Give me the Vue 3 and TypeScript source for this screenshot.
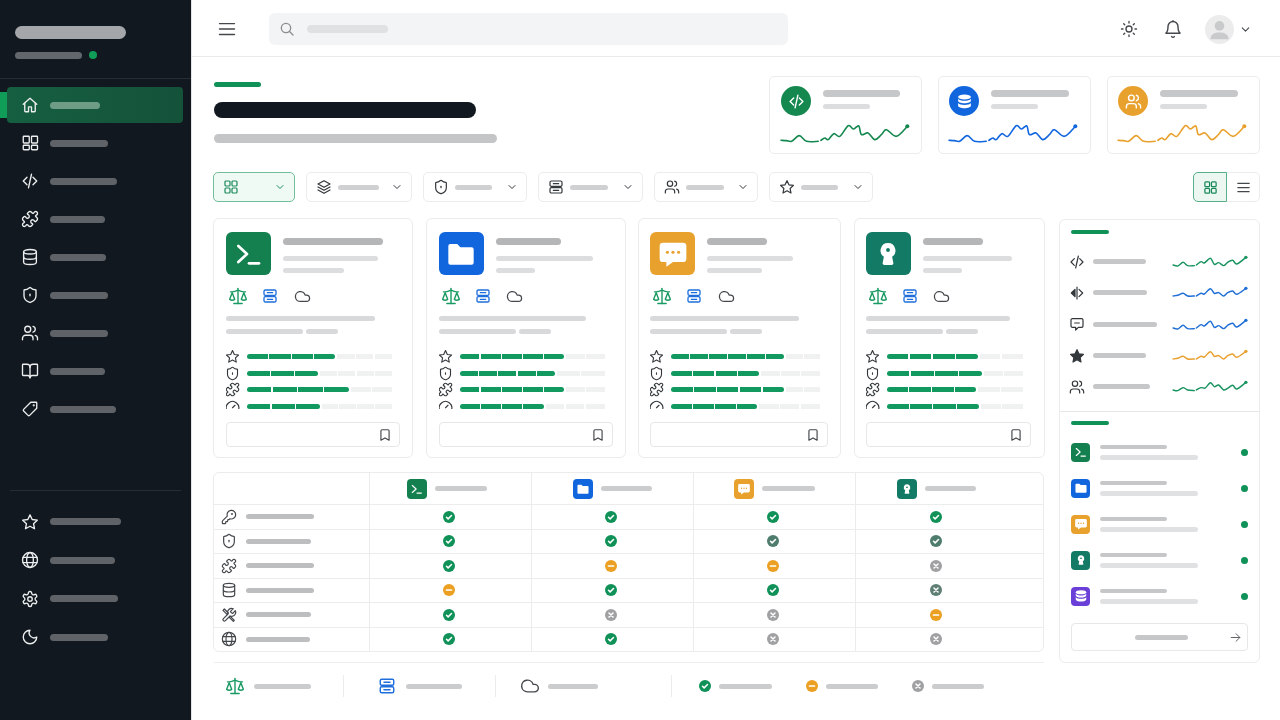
<script setup lang="ts">
const icons: Record<string, string> = {
  home: '<path d="M3 11 12 3l9 8"/><path d="M5 9.5V20a1 1 0 0 0 1 1h4v-6.5h4V21h4a1 1 0 0 0 1-1V9.5"/>',
  dash: '<rect x="3" y="3" width="8" height="9" rx="1"/><rect x="14" y="3" width="8" height="9" rx="1"/><rect x="3" y="15" width="8" height="6" rx="1"/><rect x="14" y="15" width="8" height="6" rx="1"/>',
  code: '<path d="m8 7-5 5 5 5"/><path d="m16 7 5 5-5 5"/><path d="m14 3-4 18"/>',
  puzzle: '<path d="M19.439 7.85c-.049.322.059.648.289.878l1.568 1.568c.47.47.706 1.087.706 1.704s-.235 1.233-.706 1.704l-1.611 1.611a.98.98 0 0 1-.837.276c-.47-.07-.802-.48-.968-.925a2.501 2.501 0 1 0-3.214 3.214c.446.166.855.497.925.968a.979.979 0 0 1-.276.837l-1.61 1.61a2.404 2.404 0 0 1-1.705.707 2.402 2.402 0 0 1-1.704-.706l-1.568-1.568a1.026 1.026 0 0 0-.877-.29c-.493.074-.84.504-1.02.968a2.5 2.5 0 1 1-3.237-3.237c.464-.18.894-.527.967-1.02a1.026 1.026 0 0 0-.289-.877l-1.568-1.568A2.402 2.402 0 0 1 1.998 12c0-.617.236-1.234.706-1.704L4.23 8.77c.24-.24.581-.353.917-.303.515.077.877.528 1.073 1.01a2.5 2.5 0 1 0 3.259-3.259c-.482-.196-.933-.558-1.01-1.073-.05-.336.062-.676.303-.917l1.525-1.525A2.402 2.402 0 0 1 12 1.998c.617 0 1.234.236 1.704.706l1.568 1.568c.23.23.556.338.877.29.493-.074.84-.504 1.02-.968a2.5 2.5 0 1 1 3.237 3.237c-.464.18-.894.527-.967 1.02Z"/>',
  db: '<ellipse cx="12" cy="5" rx="8.5" ry="3"/><path d="M3.5 5v14a8.5 3 0 0 0 17 0V5"/><path d="M3.5 12a8.5 3 0 0 0 17 0"/>',
  shield: '<path d="M20 13c0 5-3.5 7.5-7.66 8.95a1 1 0 0 1-.67-.01C7.5 20.5 4 18 4 13V6a1 1 0 0 1 1-1c2 0 4.5-1.2 6.24-2.72a1.17 1.17 0 0 1 1.52 0C14.51 3.81 17 5 19 5a1 1 0 0 1 1 1z"/><path d="M12 11v2"/>',
  users: '<path d="M16 21v-2a4 4 0 0 0-4-4H6a4 4 0 0 0-4 4v2"/><circle cx="9" cy="7" r="4"/><path d="M22 21v-2a4 4 0 0 0-3-3.87"/><path d="M16 3.13a4 4 0 0 1 0 7.75"/>',
  book: '<path d="M12 7v14"/><path d="M3 18a1 1 0 0 1-1-1V4a1 1 0 0 1 1-1h5a4 4 0 0 1 4 4 4 4 0 0 1 4-4h5a1 1 0 0 1 1 1v13a1 1 0 0 1-1 1h-6a3 3 0 0 0-3 3 3 3 0 0 0-3-3z"/>',
  tag: '<path d="M13 3h7a1 1 0 0 1 1 1v7l-9.5 9.5a1.5 1.5 0 0 1-2.1 0l-5.9-5.9a1.5 1.5 0 0 1 0-2.1z"/><circle cx="17" cy="7" r=".6"/>',
  star: '<path d="m12 2.5 2.9 6.2 6.8.9-5 4.7 1.3 6.7-6-3.3-6 3.3 1.3-6.7-5-4.7 6.8-.9z"/>',
  starFill: '<path fill="currentColor" d="m12 2.5 2.9 6.2 6.8.9-5 4.7 1.3 6.7-6-3.3-6 3.3 1.3-6.7-5-4.7 6.8-.9z"/>',
  globe: '<circle cx="12" cy="12" r="10"/><ellipse cx="12" cy="12" rx="4.5" ry="10"/><path d="M2.8 8.5h18.4M2.8 15.5h18.4"/>',
  gear: '<path d="M12.22 2h-.44a2 2 0 0 0-2 2v.18a2 2 0 0 1-1 1.73l-.43.25a2 2 0 0 1-2 0l-.15-.08a2 2 0 0 0-2.73.73l-.22.38a2 2 0 0 0 .73 2.73l.15.1a2 2 0 0 1 1 1.72v.51a2 2 0 0 1-1 1.74l-.15.09a2 2 0 0 0-.73 2.73l.22.38a2 2 0 0 0 2.73.73l.15-.08a2 2 0 0 1 2 0l.43.25a2 2 0 0 1 1 1.73V20a2 2 0 0 0 2 2h.44a2 2 0 0 0 2-2v-.18a2 2 0 0 1 1-1.73l.43-.25a2 2 0 0 1 2 0l.15.08a2 2 0 0 0 2.73-.73l.22-.39a2 2 0 0 0-.73-2.73l-.15-.08a2 2 0 0 1-1-1.74v-.5a2 2 0 0 1 1-1.74l.15-.09a2 2 0 0 0 .73-2.73l-.22-.38a2 2 0 0 0-2.73-.73l-.15.08a2 2 0 0 1-2 0l-.43-.25a2 2 0 0 1-1-1.73V4a2 2 0 0 0-2-2z"/><circle cx="12" cy="12" r="3"/>',
  moon: '<path d="M12 3a6.5 6.5 0 0 0 9 9 9 9 0 1 1-9-9Z"/>',
  menu: '<path d="M3 5.5h18M3 12h18M3 18.5h18"/>',
  search: '<circle cx="10.5" cy="10.5" r="7"/><path d="m21 21-5.5-5.5"/>',
  sun: '<circle cx="12" cy="12" r="4"/><path d="M12 2v2M12 20v2M4.9 4.9l1.4 1.4M17.7 17.7l1.4 1.4M2 12h2M20 12h2M4.9 19.1l1.4-1.4M17.7 6.3l1.4-1.4"/>',
  bell: '<path d="M6 9a6 6 0 0 1 12 0c0 6 2.5 8 2.5 8h-17S6 15 6 9"/><path d="M12 3V2M10.3 21a1.94 1.94 0 0 0 3.4 0"/>',
  chevron: '<path d="m6 9 6 6 6-6"/>',
  layers: '<path d="M12 2.5 3 7.5l9 5 9-5z"/><path d="m3 12 9 5 9-5"/><path d="m3 16.5 9 5 9-5"/>',
  server: '<rect x="3" y="3" width="18" height="8" rx="2"/><rect x="3" y="13" width="18" height="8" rx="2"/><path d="M8 7h8M8 17h8"/>',
  scale: '<path d="m16 16 3-8 3 8c-.87.65-1.92 1-3 1s-2.13-.35-3-1Z"/><path d="m2 16 3-8 3 8c-.87.65-1.92 1-3 1s-2.13-.35-3-1Z"/><path d="M7 21h10"/><path d="M12 3v18"/><path d="M3 7h2c2 0 5-1 7-2 2 1 5 2 7 2h2"/>',
  cloud: '<path d="M17.5 19H9a7 7 0 1 1 6.71-9h1.79a4.5 4.5 0 1 1 0 9Z"/>',
  gauge: '<path d="m12 14 4-4"/><path d="M3.34 19a10 10 0 1 1 17.32 0"/>',
  bookmark: '<path d="m19 21-7-4-7 4V5a2 2 0 0 1 2-2h10a2 2 0 0 1 2 2z"/>',
  grid: '<rect x="3" y="3" width="7.5" height="7.5" rx="1.5"/><rect x="13.5" y="3" width="7.5" height="7.5" rx="1.5"/><rect x="3" y="13.5" width="7.5" height="7.5" rx="1.5"/><rect x="13.5" y="13.5" width="7.5" height="7.5" rx="1.5"/>',
  key: '<path d="M2.586 17.414A2 2 0 0 0 2 18.828V21a1 1 0 0 0 1 1h3a1 1 0 0 0 1-1v-1a1 1 0 0 1 1-1h1a1 1 0 0 0 1-1v-1a1 1 0 0 1 1-1h.172a2 2 0 0 0 1.414-.586l.814-.814a6.5 6.5 0 1 0-4-4z"/><circle cx="16.5" cy="7.5" r=".6"/>',
  tools: '<path d="M14.7 6.3a1 1 0 0 0 0 1.4l1.6 1.6a1 1 0 0 0 1.4 0l3.77-3.77a6 6 0 0 1-7.94 7.94l-6.91 6.91a2.12 2.12 0 0 1-3-3l6.91-6.91a6 6 0 0 1 7.94-7.94z"/><path d="M3 5l2-2 6 6-2 2zM14 14l6 6-1.5 1.5-6-6"/>',
  arrow: '<path d="M4 12h16"/><path d="m13 5 7 7-7 7"/>',
  diamond: '<path d="M12 3v18"/><path fill="currentColor" d="M9 6.5 3.5 12 9 17.5z"/><path d="m15 6.5 5.5 5.5-5.5 5.5"/>',
  chat: '<path d="M5 4h14a2 2 0 0 1 2 2v9a2 2 0 0 1-2 2h-5l-4 4v-4H5a2 2 0 0 1-2-2V6a2 2 0 0 1 2-2z"/><path d="M8.5 10.5h7"/>',
  terminal: '<path d="m4 6 6.5 6L4 18"/><path d="M12 19h7.500"/>',
  folder: '<path fill="#fff" stroke="none" d="M4 4.5h5.2L11.5 7H20a1.5 1.5 0 0 1 1.5 1.5v10A1.5 1.5 0 0 1 20 20H4a1.5 1.5 0 0 1-1.5-1.5V6A1.5 1.5 0 0 1 4 4.5z"/>',
  bubble: '<path fill="#fff" stroke="none" d="M4.5 3.5h15A2.5 2.5 0 0 1 22 6v9.5a2.5 2.5 0 0 1-2.5 2.5H12l-5 3.5V18H4.5A2.5 2.5 0 0 1 2 15.5V6a2.5 2.5 0 0 1 2.5-2.5z"/><circle cx="7.8" cy="10.7" r="1.2" fill="#e9a12e" stroke="none"/><circle cx="12" cy="10.7" r="1.2" fill="#e9a12e" stroke="none"/><circle cx="16.2" cy="10.7" r="1.2" fill="#e9a12e" stroke="none"/>',
  keyhole: '<g transform="translate(12 12) scale(.86) translate(-12 -12)"><path fill="#fff" stroke="none" d="M12 2.5a6.5 6.5 0 0 1 3.6 11.9l1 5.1a1.5 1.5 0 0 1-1.5 2H8.9a1.5 1.5 0 0 1-1.5-2l1-5.1A6.5 6.5 0 0 1 12 2.5z"/><circle cx="12" cy="8.5" r="1.7" fill="#137a66" stroke="none"/></g>',
  dbFill: '<ellipse cx="12" cy="5.5" rx="9" ry="3.5" fill="#fff" stroke="none"/><path fill="#fff" stroke="none" d="M3 8v3c0 1.9 4 3.5 9 3.5s9-1.6 9-3.5V8c-1.5 1.9-5 3-9 3s-7.5-1.1-9-3z"/><path fill="#fff" stroke="none" d="M3 14v4c0 1.9 4 3.5 9 3.5s9-1.6 9-3.5v-4c-1.5 1.9-5 2.8-9 2.8S4.5 15.9 3 14z"/>',
}

const statusColors: Record<string, string> = { c: '#0f9158', d: '#4f7d6d', m: '#eba023', x: '#a0a1a3', y: '#5f7f74' }
const statusSvg = (s: string) => {
  const mark = s === 'c' || s === 'd'
    ? '<path d="m7 12.5 3.3 3.3L17 9" fill="none" stroke="#fff" stroke-width="3" stroke-linecap="round" stroke-linejoin="round"/>'
    : s === 'm'
      ? '<path d="M7 12h10" stroke="#fff" stroke-width="3.4" stroke-linecap="round"/>'
      : '<path d="m8 8 8 8M16 8l-8 8" stroke="#fff" stroke-width="3" stroke-linecap="round"/>'
  return `<circle cx="12" cy="12" r="12" fill="${statusColors[s]}"/>${mark}`
}

// turns the M..L.. point lists into a smooth curve (catmull-rom)
const smooth = (d: string) =>
  d.split('M').filter(Boolean).map((seg) => {
    const p = seg.split('L').map((s) => s.trim().split(' ').map(Number))
    let out = `M${p[0][0]} ${p[0][1]}`
    for (let i = 0; i < p.length - 1; i++) {
      const a = p[i - 1] ?? p[i]
      const b = p[i]
      const c = p[i + 1]
      const e = p[i + 2] ?? c
      out += `C${b[0] + (c[0] - a[0]) / 6} ${b[1] + (c[1] - a[1]) / 6} ${c[0] - (e[0] - b[0]) / 6} ${c[1] - (e[1] - b[1]) / 6} ${c[0]} ${c[1]}`
    }
    return out
  }).join('')

const navTop = [
  { icon: 'home', w: 50, active: true },
  { icon: 'dash', w: 58 },
  { icon: 'code', w: 67 },
  { icon: 'puzzle', w: 55 },
  { icon: 'db', w: 56 },
  { icon: 'shield', w: 58 },
  { icon: 'users', w: 58 },
  { icon: 'book', w: 55 },
  { icon: 'tag', w: 66 },
]
const navBottom = [
  { icon: 'star', w: 71 },
  { icon: 'globe', w: 65 },
  { icon: 'gear', w: 68 },
  { icon: 'moon', w: 58 },
]

const sparkA = smooth('M63 422L80 423L95 425L118 408L140 425L175 425M183 422L195 415L205 420L222 402L240 410L265 378L280 388L290 382L298 380L305 405L325 400L345 420L365 405L380 390L410 410L443 380')
const stats = [
  { color: '#14884f', icon: 'code', w: 77 },
  { color: '#1166de', icon: 'dbFill', w: 78 },
  { color: '#e9a12e', icon: 'users', w: 78 },
]

const filters = [
  { icon: 'layers', w: 41, width: 106 },
  { icon: 'shield', w: 37, width: 104 },
  { icon: 'server', w: 38, width: 105 },
  { icon: 'users', w: 38, width: 104 },
  { icon: 'star', w: 37, width: 104 },
]

const apps: Record<string, { bg: string; icon: string }> = {
  term: { bg: '#14804f', icon: 'terminal' },
  folder: { bg: '#1166de', icon: 'folder' },
  chat: { bg: '#e9a12e', icon: 'bubble' },
  lock: { bg: '#137a66', icon: 'keyhole' },
  data: { bg: '#6a3fd8', icon: 'dbFill' },
}

const metricIcons = ['star', 'shield', 'puzzle', 'gauge']
const cards = [
  { app: 'term', width: 200, title: 100, sub: [95, 61], desc: 149, fill: [[61, 4, 3], [49, 3, 4], [70, 4, 2], [50, 3, 4]] },
  { app: 'folder', width: 200, title: 65, sub: [97, 39], desc: 147, fill: [[72, 5, 2], [66, 5, 2], [72, 5, 2], [58, 4, 3]] },
  { app: 'chat', width: 203, title: 60, sub: [86, 55], desc: 149, fill: [[76, 6, 2], [59, 4, 3], [76, 5, 2], [58, 4, 3]] },
  { app: 'lock', width: 191, title: 60, sub: [89, 39], desc: 144, fill: [[67, 4, 2], [70, 4, 2], [66, 4, 2], [68, 4, 2]] },
]
const gridCols = cards.map((c) => c.width + 'px').join(' ')

const cols = [
  { app: 'term', w: 52 },
  { app: 'folder', w: 51 },
  { app: 'chat', w: 53 },
  { app: 'lock', w: 51 },
]
const rows = [
  { icon: 'key', w: 68, s: ['c', 'c', 'c', 'c'] },
  { icon: 'shield', w: 65, s: ['c', 'c', 'd', 'd'] },
  { icon: 'puzzle', w: 68, s: ['c', 'm', 'm', 'x'] },
  { icon: 'db', w: 68, s: ['m', 'c', 'c', 'y'] },
  { icon: 'tools', w: 65, s: ['c', 'x', 'x', 'm'] },
  { icon: 'globe', w: 64, s: ['c', 'c', 'x', 'x'] },
]

const sparkB = smooth('M368 150L382 153L398 142L412 152L432 152M438 150L452 140L462 144L480 130L492 148L505 143L520 152L532 142L547 136L560 147L587 127')
const sparkC = smooth('M368 150L382 148L398 142L412 150L432 150M438 150L452 142L462 144L480 128L492 142L505 140L520 150L532 140L547 135L560 145L587 127')
const sparkD = smooth('M368 150L382 152L398 143L412 150L432 152M438 150L452 143L465 144L480 128L492 140L505 135L520 150L532 145L547 136L560 147L587 127')
const activity = [
  { icon: 'code', w: 53, color: '#1a9460', path: sparkB },
  { icon: 'diamond', w: 54, color: '#1f6fd6', path: sparkC },
  { icon: 'chat', w: 64, color: '#1f6fd6', path: sparkB },
  { icon: 'starFill', w: 53, color: '#e9a02f', path: sparkC },
  { icon: 'users', w: 57, color: '#1a9460', path: sparkD },
]
const services = ['term', 'folder', 'chat', 'lock', 'data']
</script>

<template>
  <div class="page">
    <aside class="side">
      <div class="brand">
        <div class="brand-name"></div>
        <div class="brand-sub"><span class="brand-line"></span><span class="brand-dot"></span></div>
      </div>
      <nav class="nav">
        <a v-for="item in navTop" :key="item.icon" class="nav-item" :class="{ active: item.active }">
          <svg class="ic nav-ic" viewBox="0 0 24 24" v-html="icons[item.icon]"></svg>
          <span class="nav-label" :style="{ width: item.w + 'px' }"></span>
        </a>
      </nav>
      <nav class="nav nav-bottom">
        <a v-for="item in navBottom" :key="item.icon" class="nav-item">
          <svg class="ic nav-ic" viewBox="0 0 24 24" v-html="icons[item.icon]"></svg>
          <span class="nav-label" :style="{ width: item.w + 'px' }"></span>
        </a>
      </nav>
    </aside>

    <div class="main">
      <header class="top">
        <svg class="ic top-ic" viewBox="0 0 24 24" v-html="icons.menu"></svg>
        <div class="search">
          <svg class="ic search-ic" viewBox="0 0 24 24" v-html="icons.search"></svg>
          <span class="search-text"></span>
        </div>
        <div class="top-right">
          <svg class="ic sun" viewBox="0 0 24 24" v-html="icons.sun"></svg>
          <svg class="ic top-ic bell" viewBox="0 0 24 24" v-html="icons.bell"></svg>
          <div class="avatar">
            <svg viewBox="0 0 24 24"><circle cx="12" cy="9" r="4" fill="#c9cacb" /><path d="M4.5 20c0-4 3.5-5.5 7.5-5.5s7.5 1.5 7.5 5.5z" fill="#c9cacb" /></svg>
          </div>
          <svg class="ic chev" viewBox="0 0 24 24" v-html="icons.chevron"></svg>
        </div>
      </header>

      <div class="content">
        <section class="hero">
          <div class="heading">
            <div class="accent"></div>
            <div class="title"></div>
            <div class="subtitle"></div>
          </div>
          <div class="stats">
            <div v-for="s in stats" :key="s.color" class="stat" :style="{ color: s.color }">
              <div class="stat-head">
                <div class="stat-ic" :style="{ background: s.color }">
                  <svg class="ic" viewBox="0 0 24 24" v-html="icons[s.icon]"></svg>
                </div>
                <div class="stat-text">
                  <div class="stat-line" :style="{ width: s.w + 'px' }"></div>
                  <div class="stat-sub"></div>
                </div>
              </div>
              <svg class="stat-spark" viewBox="63 370 385 60">
                <path :d="sparkA" fill="none" stroke="currentColor" stroke-width="4.8" stroke-linejoin="round" stroke-linecap="round" />
                <circle cx="443" cy="380" r="6" fill="currentColor" />
              </svg>
            </div>
          </div>
        </section>

        <section class="filters">
          <button class="filter filter-on">
            <svg class="ic filter-ic" viewBox="0 0 24 24" v-html="icons.grid"></svg>
            <svg class="ic filter-chev" viewBox="0 0 24 24" v-html="icons.chevron"></svg>
          </button>
          <button v-for="f in filters" :key="f.icon" class="filter" :style="{ width: f.width + 'px' }">
            <svg class="ic filter-ic" viewBox="0 0 24 24" v-html="icons[f.icon]"></svg>
            <span class="filter-label" :style="{ width: f.w + 'px' }"></span>
            <svg class="ic filter-chev" viewBox="0 0 24 24" v-html="icons.chevron"></svg>
          </button>
          <div class="toggle">
            <button class="toggle-btn on"><svg class="ic" viewBox="0 0 24 24" v-html="icons.grid"></svg></button>
            <button class="toggle-btn"><svg class="ic" viewBox="0 0 24 24" v-html="icons.menu"></svg></button>
          </div>
        </section>

        <section class="body">
          <div class="left">
            <div class="cards" :style="{ gridTemplateColumns: gridCols }">
              <article v-for="c in cards" :key="c.app" class="card">
                <div class="card-head">
                  <div class="card-ic" :style="{ background: apps[c.app].bg }">
                    <svg class="ic" viewBox="0 0 24 24" v-html="icons[apps[c.app].icon]"></svg>
                  </div>
                  <div class="card-text">
                    <div class="card-title" :style="{ width: c.title + 'px' }"></div>
                    <div class="card-sub" :style="{ width: c.sub[0] + 'px' }"></div>
                    <div class="card-sub" :style="{ width: c.sub[1] + 'px' }"></div>
                  </div>
                </div>
                <div class="card-tags">
                  <svg class="ic tag-scale green" viewBox="0 0 24 24" v-html="icons.scale"></svg>
                  <svg class="ic tag-server blue" viewBox="0 0 24 24" v-html="icons.server"></svg>
                  <svg class="ic tag-cloud" viewBox="0 0 24 24" v-html="icons.cloud"></svg>
                </div>
                <div class="desc" :style="{ width: c.desc + 'px' }"></div>
                <div class="desc-row"><span class="desc desc-a"></span><span class="desc desc-b"></span></div>
                <div class="metrics">
                  <div v-for="(m, i) in c.fill" :key="i" class="metric">
                    <svg class="ic metric-ic" viewBox="0 0 24 24" v-html="icons[metricIcons[i]]"></svg>
                    <div class="bar">
                      <div class="bar-fill" :style="{ width: m[0] + '%' }">
                        <span v-for="n in m[1]" :key="n" class="seg seg-on"></span>
                      </div>
                      <div class="bar-rest">
                        <span v-for="n in m[2]" :key="n" class="seg"></span>
                      </div>
                    </div>
                  </div>
                </div>
                <div class="card-btn">
                  <svg class="ic bookmark" viewBox="0 0 24 24" v-html="icons.bookmark"></svg>
                </div>
              </article>
            </div>

            <div class="table">
              <div class="tr tr-head">
                <div class="td td-label"></div>
                <div v-for="c in cols" :key="c.app" class="td">
                  <div class="mini-ic" :style="{ background: apps[c.app].bg }">
                    <svg class="ic" viewBox="0 0 24 24" v-html="icons[apps[c.app].icon]"></svg>
                  </div>
                  <span class="th-label" :style="{ width: c.w + 'px' }"></span>
                </div>
              </div>
              <div v-for="r in rows" :key="r.icon" class="tr">
                <div class="td td-label">
                  <svg class="ic row-ic" viewBox="0 0 24 24" v-html="icons[r.icon]"></svg>
                  <span class="row-label" :style="{ width: r.w + 'px' }"></span>
                </div>
                <div v-for="(s, i) in r.s" :key="i" class="td td-status">
                  <svg class="status" viewBox="0 0 24 24" v-html="statusSvg(s)"></svg>
                </div>
              </div>
            </div>

            <div class="legend">
              <div class="lg lg-1">
                <svg class="ic lg-ic green" viewBox="0 0 24 24" v-html="icons.scale"></svg>
                <span class="lg-bar lg-w57"></span>
              </div>
              <div class="lg lg-2">
                <svg class="ic lg-server blue" viewBox="0 0 24 24" v-html="icons.server"></svg>
                <span class="lg-bar lg-w56"></span>
              </div>
              <div class="lg lg-3">
                <svg class="ic lg-ic" viewBox="0 0 24 24" v-html="icons.cloud"></svg>
                <span class="lg-bar lg-w50"></span>
              </div>
              <div class="lg lg-4">
                <svg class="status" viewBox="0 0 24 24" v-html="statusSvg('c')"></svg>
                <span class="lg-bar lg-w53"></span>
                <svg class="status lg-gap" viewBox="0 0 24 24" v-html="statusSvg('m')"></svg>
                <span class="lg-bar lg-w52"></span>
                <svg class="status lg-gap" viewBox="0 0 24 24" v-html="statusSvg('x')"></svg>
                <span class="lg-bar lg-w52"></span>
              </div>
            </div>
          </div>

          <aside class="panel">
            <div class="panel-top">
              <div class="panel-accent"></div>
              <div v-for="a in activity" :key="a.icon" class="act">
                <svg class="ic act-ic" viewBox="0 0 24 24" v-html="icons[a.icon]"></svg>
                <span class="act-label" :style="{ width: a.w + 'px' }"></span>
                <svg class="act-spark" viewBox="368 120 225 40" :style="{ color: a.color }">
                  <path :d="a.path" fill="none" stroke="currentColor" stroke-width="4.4" stroke-linejoin="round" stroke-linecap="round" />
                  <circle cx="587" cy="127" r="5" fill="currentColor" />
                </svg>
              </div>
            </div>
            <div class="panel-bottom">
              <div class="panel-accent"></div>
              <div v-for="s in services" :key="s" class="svc">
                <div class="svc-ic" :style="{ background: apps[s].bg }">
                  <svg class="ic" viewBox="0 0 24 24" v-html="icons[apps[s].icon]"></svg>
                </div>
                <div class="svc-text">
                  <div class="svc-a"></div>
                  <div class="svc-b"></div>
                </div>
                <span class="svc-dot"></span>
              </div>
              <div class="panel-btn">
                <span class="panel-btn-label"></span>
                <svg class="ic panel-arrow" viewBox="0 0 24 24" v-html="icons.arrow"></svg>
              </div>
            </div>
          </aside>
        </section>
      </div>
    </div>
  </div>
</template>

<style scoped>
.page {
  display: flex;
  width: 1280px;
  height: 720px;
  overflow: hidden;
  background: #fff;
  font-family: "Liberation Sans", sans-serif;
}
.ic {
  display: block;
  flex: none;
  fill: none;
  stroke: currentColor;
  stroke-width: 2;
  stroke-linecap: round;
  stroke-linejoin: round;
}

/* sidebar */
.side {
  width: 192px;
  flex: none;
  box-sizing: border-box;
  display: flex;
  flex-direction: column;
  background: #11181f;
  border-right: 1px solid #e3e5e6;
}
.brand {
  height: 79px;
  flex: none;
  box-sizing: border-box;
  padding: 26px 0 0 15px;
  border-bottom: 1px solid #262d33;
}
.brand-name {
  width: 111px;
  height: 13px;
  border-radius: 7px;
  background: #a4a6a9;
}
.brand-sub {
  display: flex;
  align-items: center;
  gap: 7px;
  margin-top: 12px;
}
.brand-line {
  width: 67px;
  height: 7px;
  border-radius: 4px;
  background: #63676b;
}
.brand-dot {
  width: 8px;
  height: 8px;
  border-radius: 50%;
  background: #0f9d58;
}
.nav {
  display: flex;
  flex-direction: column;
  gap: 2px;
  padding-top: 8px;
}
.nav-item {
  position: relative;
  display: flex;
  align-items: center;
  gap: 11px;
  height: 36px;
  margin-left: 7px;
  width: 176px;
  padding-left: 14px;
  box-sizing: border-box;
  border-radius: 4px;
  color: #eceeef;
}
.nav-item.active {
  background: linear-gradient(90deg, #165f41, #14523a);
}
.nav-item.active::before {
  content: "";
  position: absolute;
  left: -7px;
  top: 5px;
  width: 7px;
  height: 26px;
  background: #0f9d58;
}
.nav-ic {
  width: 18px;
  height: 18px;
  stroke-width: 1.8;
}
.nav-label {
  height: 7px;
  border-radius: 4px;
  background: #5f6367;
}
.active .nav-label {
  background: #6f9c85;
}
.nav-bottom {
  margin-top: auto;
  margin-left: 10px;
  margin-right: 10px;
  margin-bottom: 65px;
  padding-top: 13px;
  gap: 2.5px;
  border-top: 1px solid #262d33;
}
.nav-bottom .nav-item {
  margin-left: -3px;
}

/* top bar */
.main {
  flex: 1;
  min-width: 0;
  display: flex;
  flex-direction: column;
}
.top {
  height: 57px;
  flex: none;
  box-sizing: border-box;
  display: flex;
  align-items: center;
  padding: 2px 28px 0 25px;
  border-bottom: 1px solid #e8e9ea;
  color: #44484c;
}
.top-ic {
  width: 20px;
  height: 20px;
  stroke-width: 1.7;
}
.sun {
  width: 18px;
  height: 18px;
  stroke-width: 1.8;
}
.search {
  display: flex;
  align-items: center;
  width: 519px;
  height: 32px;
  margin-left: 32px;
  padding-left: 10px;
  box-sizing: border-box;
  border-radius: 6px;
  background: #f3f4f5;
  color: #8b8d90;
}
.search-ic {
  width: 16px;
  height: 16px;
}
.search-text {
  width: 81px;
  height: 8px;
  margin-left: 12px;
  border-radius: 4px;
  background: #e0e1e3;
}
.top-right {
  display: flex;
  align-items: center;
  margin-left: auto;
}
.bell {
  margin-left: 25px;
}
.avatar {
  width: 29px;
  height: 29px;
  margin-left: 22px;
  border-radius: 50%;
  background: #ececed;
}
.chev {
  width: 13px;
  height: 13px;
  margin-left: 5px;
}

/* hero */
.content {
  flex: 1;
  min-height: 0;
  padding: 19px 20px 0 21px;
}
.hero {
  display: flex;
  justify-content: space-between;
  height: 78px;
}
.heading {
  padding: 6px 0 0 1px;
}
.accent {
  width: 47px;
  height: 5px;
  border-radius: 3px;
  background: #0f9158;
}
.title {
  width: 262px;
  height: 16px;
  margin-top: 15px;
  border-radius: 8px;
  background: #11181f;
}
.subtitle {
  width: 283px;
  height: 9px;
  margin-top: 16px;
  border-radius: 5px;
  background: #c4c5c7;
}
.stats {
  display: flex;
  gap: 16px;
}
.stat {
  width: 153px;
  box-sizing: border-box;
  padding: 9px 10px 0 11px;
  border: 1px solid #ececed;
  border-radius: 5px;
}
.stat + .stat {
  padding-left: 10px;
}
.stat-head {
  display: flex;
  gap: 12px;
}
.stat-ic {
  width: 30px;
  height: 30px;
  flex: none;
  display: flex;
  align-items: center;
  justify-content: center;
  border-radius: 50%;
  color: #fff;
}
.stat-ic .ic {
  width: 17px;
  height: 17px;
}
.stat-text {
  padding-top: 4px;
}
.stat-line {
  height: 7px;
  border-radius: 4px;
  background: #c6c7c8;
}
.stat-sub {
  width: 47px;
  height: 5px;
  margin-top: 7px;
  border-radius: 3px;
  background: #dcddde;
}
.stat-spark {
  display: block;
  width: 128px;
  height: 20px;
  margin-top: 7px;
  overflow: visible;
}

/* filters */
.filters {
  display: flex;
  gap: 11px;
  margin-top: 18px;
  height: 30px;
}
.filter {
  display: flex;
  align-items: center;
  width: 82px;
  height: 30px;
  padding: 0 8px 0 9px;
  box-sizing: border-box;
  background: #fff;
  border: 1px solid #ececed;
  border-radius: 5px;
  color: #33383c;
}
.filter-on {
  background: #f0faf5;
  border-color: #72bd9a;
  color: #1a8a5a;
}
.filter-ic {
  width: 16px;
  height: 16px;
  stroke-width: 1.8;
}
.filter-label {
  height: 5px;
  margin-left: 6px;
  border-radius: 3px;
  background: #cfd0d1;
}
.filter-chev {
  width: 12px;
  height: 12px;
  margin-left: auto;
}
.toggle {
  display: flex;
  width: 67px;
  height: 30px;
  margin-left: auto;
  border: 1px solid #ececed;
  border-radius: 5px;
  box-sizing: border-box;
}
.toggle-btn {
  flex: 1;
  display: flex;
  align-items: center;
  justify-content: center;
  padding: 0;
  border: 0;
  background: none;
  color: #44484c;
}
.toggle-btn .ic {
  width: 15px;
  height: 15px;
}
.toggle-btn.on {
  flex: none;
  width: 34px;
  margin: -1px 0 -1px -1px;
  background: #ebf7f0;
  border: 1px solid #5aaf8a;
  border-radius: 5px 0 0 5px;
  color: #1a8a5a;
}

/* body */
.body {
  display: flex;
  gap: 15px;
  margin-top: 16px;
}
.left {
  width: 831px;
  flex: none;
}
.cards {
  display: grid;
  column-gap: 12.5px;
  height: 240px;
}
.card {
  box-sizing: border-box;
  padding: 13px 12px 0;
  border: 1px solid #ececed;
  border-radius: 6px;
  min-width: 0;
}
.card:nth-child(n + 3) {
  padding-left: 11px;
}
.card:nth-child(4) {
  padding-right: 13px;
}
.card-head {
  display: flex;
  gap: 12px;
}
.card-ic {
  width: 45px;
  height: 43px;
  flex: none;
  display: flex;
  align-items: center;
  justify-content: center;
  border-radius: 6px;
  color: #fff;
}
.card-ic .ic {
  width: 32px;
  height: 32px;
}
.card-text {
  padding-top: 6px;
}
.card-title {
  height: 7px;
  border-radius: 4px;
  background: #b5b6b8;
}
.card-sub {
  height: 5px;
  margin-top: 7px;
  border-radius: 3px;
  background: #dcddde;
}
.card-title + .card-sub {
  margin-top: 11px;
}
.card-tags {
  display: flex;
  align-items: center;
  height: 18px;
  gap: 14px;
  margin: 12px 0 0 3px;
  color: #44484c;
}
.tag-scale {
  width: 20px;
  height: 20px;
  margin: 0 -1px;
  stroke-width: 1.7;
}
.tag-server {
  width: 16px;
  height: 16px;
  margin: 0 1px;
  stroke-width: 2;
}
.tag-cloud {
  width: 17px;
  height: 17px;
  margin: 0 .5px;
  stroke-width: 1.8;
}
.green {
  color: #1a9a63;
}
.blue {
  color: #1e6fdc;
}
.desc {
  display: block;
  height: 5px;
  margin-top: 11px;
  border-radius: 3px;
  background: #d8d9da;
}
.desc-row {
  display: flex;
  gap: 3px;
  margin-top: 8px;
}
.desc-row .desc {
  margin: 0;
}
.desc-a {
  width: 77px;
}
.desc-b {
  width: 32px;
}
.metrics {
  height: 61px;
  margin-top: 14px;
  overflow: hidden;
}
.metric {
  display: flex;
  align-items: center;
  gap: 7px;
  height: 16.7px;
  margin-right: 8px;
  color: #33383c;
}
.metric-ic {
  width: 15px;
  height: 15px;
  margin-left: -1px;
  stroke-width: 1.8;
}
.bar {
  flex: 1;
  display: flex;
  gap: 2px;
  height: 5px;
}
.bar-fill,
.bar-rest {
  display: flex;
  gap: 1.2px;
}
.bar-rest {
  flex: 1;
}
.seg {
  flex: 1;
  background: #f0f1f1;
}
.seg-on {
  background: #12995f;
}
.seg-on:first-child {
  border-radius: 3px 0 0 3px;
}
.seg-on:last-child {
  border-radius: 0 3px 3px 0;
}
.card-btn {
  display: flex;
  align-items: center;
  justify-content: flex-end;
  height: 25px;
  margin-top: 13px;
  padding-right: 7px;
  box-sizing: border-box;
  border: 1px solid #e6e7e8;
  border-radius: 4px;
  color: #44484c;
}
.bookmark {
  width: 14px;
  height: 14px;
}

/* table */
.table {
  margin-top: 14px;
  border: 1px solid #ececed;
  border-radius: 6px;
  height: 180px;
  box-sizing: border-box;
}
.tr {
  display: grid;
  grid-template-columns: 155px 162px 162px 162px 1fr;
  height: 24.5px;
  box-sizing: border-box;
  border-bottom: 1px solid #ececed;
}
.tr:last-child {
  border-bottom: 0;
  height: 23.5px;
}
.tr-head {
  height: 32px;
}
.tr-head .td:nth-child(2) {
  padding-right: 8px;
}
.td {
  display: flex;
  align-items: center;
  justify-content: center;
  gap: 8px;
  border-left: 1px solid #ececed;
}
.td:last-child {
  padding-right: 26px;
}
.td-status {
  padding-right: 3px;
}
.td-status:last-child {
  padding-right: 28px;
}
.td-label {
  justify-content: flex-start;
  gap: 9px;
  padding-left: 7px;
  border-left: 0;
}
.mini-ic {
  width: 20px;
  height: 20px;
  display: flex;
  align-items: center;
  justify-content: center;
  border-radius: 4px;
  color: #fff;
}
.mini-ic .ic {
  width: 14px;
  height: 14px;
}
.th-label {
  height: 5px;
  border-radius: 3px;
  background: #cbcccd;
}
.row-ic {
  width: 16px;
  height: 16px;
  stroke-width: 1.8;
  color: #44484c;
}
.row-label {
  height: 5px;
  border-radius: 3px;
  background: #bdbebf;
}
.status {
  display: block;
  flex: none;
  width: 12px;
  height: 12px;
}

/* legend */
.legend {
  display: flex;
  height: 46px;
  margin: 10px 0 0 1px;
  border-top: 1px solid #eeeeef;
  align-items: center;
}
.lg {
  display: flex;
  align-items: center;
  height: 22px;
  box-sizing: border-box;
  border-right: 1px solid #ececed;
  color: #44484c;
}
.lg-1 {
  width: 130px;
  padding-left: 11px;
  gap: 9px;
}
.lg-2 {
  width: 152px;
  padding-left: 33px;
  gap: 9px;
}
.lg-3 {
  width: 176px;
  padding-left: 24px;
  gap: 8px;
}
.lg-4 {
  padding-left: 27px;
  gap: 8px;
  border-right: 0;
}
.lg-ic {
  width: 20px;
  height: 20px;
  stroke-width: 1.7;
}
.lg-server {
  width: 18px;
  height: 18px;
  margin: 0 1px;
  stroke-width: 1.9;
}
.lg-bar {
  height: 5px;
  border-radius: 3px;
  background: #cbcccd;
}
.lg-w57 { width: 57px; }
.lg-w56 { width: 56px; }
.lg-w50 { width: 50px; }
.lg-w53 { width: 53px; }
.lg-w52 { width: 52px; }
.lg-gap {
  margin-left: 26px;
}

/* right panel */
.panel {
  width: 201px;
  height: 444px;
  flex: none;
  margin-top: 1px;
  box-sizing: border-box;
  border: 1px solid #ececed;
  border-radius: 6px;
}
.panel-top {
  height: 192px;
  box-sizing: border-box;
  padding: 10px 11px 0;
  border-bottom: 1px solid #e6e7e8;
}
.panel-accent {
  width: 38px;
  height: 4px;
  border-radius: 2px;
  background: #0f9158;
}
.panel-top .panel-accent {
  margin-bottom: 12px;
}
.act {
  display: flex;
  align-items: center;
  height: 31.3px;
  color: #33383c;
}
.act-ic {
  width: 16px;
  height: 16px;
  margin-left: -2px;
  stroke-width: 1.8;
}
.act-label {
  height: 5px;
  margin-left: 8px;
  border-radius: 3px;
  background: #c6c7c8;
}
.act-spark {
  width: 75px;
  height: 13.3px;
  margin-left: auto;
  overflow: visible;
}
.panel-bottom {
  padding: 9px 11px 0;
}
.panel-bottom .panel-accent {
  margin-bottom: 9px;
}
.svc {
  display: flex;
  align-items: center;
  height: 36px;
}
.svc-ic {
  width: 19px;
  height: 19px;
  flex: none;
  display: flex;
  align-items: center;
  justify-content: center;
  border-radius: 4px;
  color: #fff;
}
.svc-ic .ic {
  width: 14px;
  height: 14px;
}
.svc-text {
  margin-left: 10px;
}
.svc-a {
  width: 67px;
  height: 4.5px;
  border-radius: 3px;
  background: #c6c7c8;
}
.svc-b {
  width: 98px;
  height: 4.5px;
  margin-top: 6px;
  border-radius: 3px;
  background: #e0e1e2;
}
.svc-dot {
  width: 7px;
  height: 7px;
  margin-left: auto;
  border-radius: 50%;
  background: #0f9158;
}
.panel-btn {
  display: flex;
  align-items: center;
  height: 28px;
  margin-top: 9px;
  padding: 0 5px 0 63px;
  box-sizing: border-box;
  border: 1px solid #e6e7e8;
  border-radius: 4px;
  color: #55595d;
}
.panel-btn-label {
  width: 53px;
  height: 5px;
  border-radius: 3px;
  background: #c6c7c8;
}
.panel-arrow {
  width: 13px;
  height: 13px;
  margin-left: auto;
  stroke-width: 1.7;
}
</style>

<style>
html,
body {
  margin: 0;
  background: #fff;
}
</style>
